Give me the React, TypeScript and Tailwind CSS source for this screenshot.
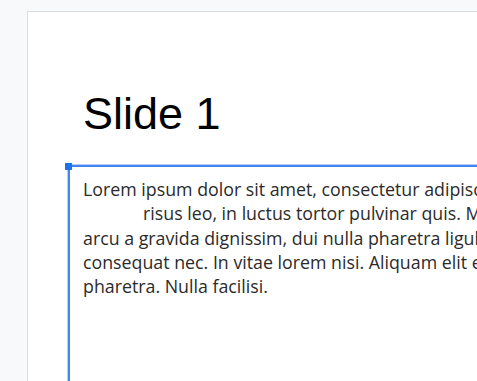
export default function App() {
  const lines = [
    { text: 'Lorem ipsum dolor sit amet, consectetur adipiscing', indent: false },
    { text: 'risus leo, in luctus tortor pulvinar quis. Maecenas', indent: true },
    { text: 'arcu a gravida dignissim, dui nulla pharetra ligula', indent: false },
    { text: 'consequat nec. In vitae lorem nisi. Aliquam elit erat', indent: false },
    { text: 'pharetra. Nulla facilisi.', indent: false },
  ];

  return (
    <div className="w-[477px] h-[381px] overflow-hidden bg-[#f8f9fa] pl-[27px] pt-[11px]">
      {/* Slide canvas */}
      <div className="w-[700px] h-[500px] bg-white border border-[#dadce0]">
        <h1
          className="ml-[55px] mt-[76px] text-[45px] leading-[52px] text-black"
          style={{ fontFamily: '"Liberation Sans", Arial, sans-serif' }}
        >
          Slide 1
        </h1>

        {/* Selected text box */}
        <div className="relative ml-[40px] mt-[25px] h-[300px] border-l-2 border-t-2 border-[#4285f4] shadow-[0_0_0_1px_#b6cffa] pl-[13px] pt-[10px]">
          <div className="absolute -left-[5px] -top-[4px] w-[7px] h-[7px] bg-[#1a73e8]" />
          <div
            className="text-[17.8px] leading-[24.3px] text-[#2b2b2b]"
            style={{ fontFamily: '"Open Sans", sans-serif' }}
          >
            {lines.map((l, i) => (
              <div key={i} className={`whitespace-nowrap ${l.indent ? 'pl-[60px]' : ''}`}>
                {l.text}
              </div>
            ))}
          </div>
        </div>
      </div>
    </div>
  );
}
